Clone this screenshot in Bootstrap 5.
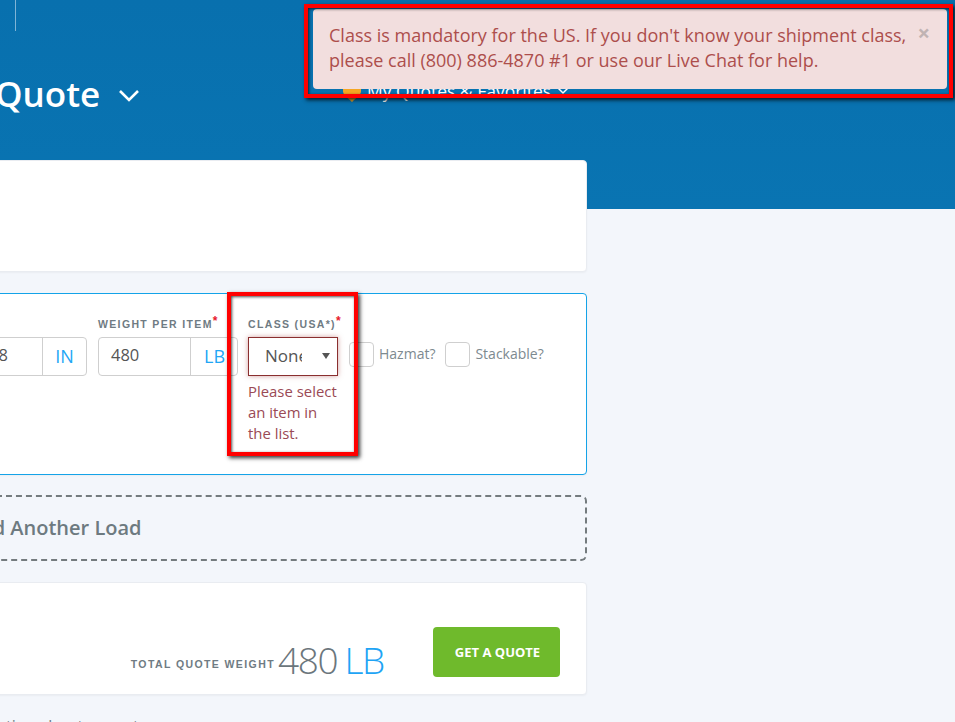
<!DOCTYPE html>
<html lang="en">
<head>
    <meta charset="UTF-8">
    <meta name="viewport" content="width=device-width, initial-scale=1.0">
    <title>Get a Quote</title>
    <link href="https://cdn.jsdelivr.net/npm/bootstrap@5.3.0/dist/css/bootstrap.min.css" rel="stylesheet">
    <style>
        html, body { height: 722px; overflow: hidden; }
        body { background: #f3f6fb; font-family: "Open Sans", sans-serif; color: #555; position: relative; }
        .hero { height: 209px; background: linear-gradient(180deg, #0870ae 0%, #0974b2 100%); color: #fff; }
        .hero-tick { width: 1px; height: 31px; margin-left: 15px; background: #7fb4d6; }
        .hero-row { margin-top: 35px; margin-left: -5px; height: 56px; }
        .hero-title { font-size: 35px; font-weight: 600; line-height: 56px; margin: 0; width: 105px; }
        .hero-chev { margin-left: 18px; margin-top: 22px; }
        .hero-fav { margin-left: 203px; font-size: 17.5px; margin-top: 12px; gap: 6px; }
        .page-col { width: 607px; margin-left: -20px; margin-top: -49px; gap: 21px; }
        .panel { background: #fff; border-radius: 4px; border: 1px solid #e9ecf1; box-shadow: 0 1px 2px rgba(0, 0, 0, .04); }
        .panel-top { height: 112px; }
        .panel-load { height: 182px; border-color: #14a3e8; padding: 22px 0 0 0; }
        .panel-add { height: 66px; background: transparent; border: 2px dashed #747b7e; box-shadow: none; border-radius: 6px; margin-top: -1px; }
        .add-text { font-size: 20px; font-weight: 600; color: #6d7a80; margin-left: -15px; }
        .panel-sum { height: 113px; padding: 44px 26px 0 0; }
        .field-label { font-family: "Liberation Sans", sans-serif; font-size: 10.5px; font-weight: 700; letter-spacing: 1.35px; color: #6f7b83; line-height: 14px; height: 14px; white-space: nowrap; margin-bottom: 6px; margin-top: 1px; }
        .field-label sup { color: #e8192c; font-size: 12px; top: -3px; letter-spacing: 0; }
        .box-group { height: 39px; border: 1px solid #cfcfcf; border-radius: 4px; background: #fff; }
        .box-input { font-size: 16.5px; color: #555; padding: 0 0 2px 12px; flex: 1 1 auto; }
        .box-unit { font-size: 18px; color: #22a6f5; border-left: 1px solid #cfcfcf; }
        .group-dims { width: 106px; }
        .group-dims .box-input { margin-left: -5px; }
        .group-dims .box-unit { width: 44px; }
        .group-weight { width: 140px; }
        .group-weight .box-unit { width: 47px; padding-left: 13px; }
        .field-weight { margin-left: 11px; }
        .field-class { width: 90px; margin-left: 10px; }
        .select-wrap { position: relative; }
        .select-wrap::after { content: ""; position: absolute; left: 74px; top: 16px; border-style: solid; border-width: 6px 4px 0 4px; border-color: #555 transparent transparent transparent; pointer-events: none; }
        .class-select { appearance: none; -webkit-appearance: none; display: block; width: 90px; height: 39px; border: 1px solid #8a2f2f; box-shadow: 0 0 5px rgba(169, 68, 66, .5); border-radius: 0; background: #fff; font-family: "Open Sans", sans-serif; font-size: 17px; color: #555; padding: 0 35px 2px 16px; outline: 0; }
        .class-help { font-size: 14.9px; line-height: 21px; color: #9a4a55; margin-top: 5px; }
        .tick-box { width: 25px; height: 25px; border: 1px solid #cfcfcf; border-radius: 4px; background: #fff; }
        .tick-text { font-size: 14px; color: #7d8a90; margin-left: 5px; padding-bottom: 2px; }
        .checks { margin-top: 26px; margin-left: 11px; height: 25px; }
        .check-two { margin-left: 10px; }
        .sum-label { font-family: "Liberation Sans", sans-serif; font-size: 10.5px; font-weight: 700; letter-spacing: 1.4px; color: #6f7b83; margin-right: 3px; padding-bottom: 9px; }
        .sum-num { font-size: 37px; font-weight: 300; letter-spacing: -1.3px; line-height: 44px; color: #6b767c; margin-top: 11px; }
        .sum-unit { color: #1ea4f5; margin-left: 7px; }
        .quote-btn { width: 127px; height: 50px; margin-left: 49px; padding: 2px 0 0 2px; background: #6fba2c; border: 0; border-radius: 4px; color: #fff; font-size: 13px; font-weight: 700; }
        .foot-text { font-size: 16px; color: #6d7a80; margin-top: 19px; margin-left: 6px; white-space: nowrap; }
        .flash { position: absolute; left: 313px; top: 9px; width: 634px; height: 80px; background: #f2dede; border-radius: 4px; color: #ad4e4c; font-size: 18px; line-height: 25px; padding: 14px 16px; }
        .flash-close { position: absolute; right: 17px; top: 11px; font-size: 22px; line-height: 25px; font-weight: 700; color: #c0b3b3; }
        .mark-box { position: absolute; border: 4px solid #f00; box-shadow: 2px 2px 4px rgba(0, 0, 0, .8), inset 1px 1px 3px rgba(0, 0, 0, .7); }
        .mark-top { left: 304px; top: 4px; width: 649px; height: 94px; }
        .mark-class { left: 227px; top: 292px; width: 131px; height: 164px; }
    </style>
</head>
<body>
    <div class="hero">
        <div class="hero-tick"></div>
        <div class="hero-row d-flex align-items-start">
            <h1 class="hero-title">Quote</h1>
            <svg class="hero-chev" width="22" height="14" viewBox="0 0 22 14" fill="none" stroke="#fff" stroke-width="2.6"><path d="M2 3l9 9 9-9"/></svg>
            <div class="hero-fav d-flex align-items-center">
                <svg width="18" height="22" viewBox="0 0 18 22"><path d="M0 2h18v9c0 4-4 6-9 11-5-5-9-7-9-11z" fill="#f5a623"/></svg>
                <span>My Quotes &amp; Favorites</span>
                <svg width="12" height="8" viewBox="0 0 12 8" fill="none" stroke="#fff" stroke-width="1.5"><path d="M1 1l5 5 5-5"/></svg>
            </div>
        </div>
    </div>

    <div class="page-col d-flex flex-column">
        <div class="panel panel-top"></div>
        <div class="panel panel-load d-flex">
            <div class="group-dims">
                <div class="field-label">&nbsp;</div>
                <div class="box-group d-flex align-items-center">
                    <div class="box-input">48</div>
                    <div class="box-unit h-100 d-flex align-items-center justify-content-center">IN</div>
                </div>
            </div>
            <div class="field-weight">
                <div class="field-label">WEIGHT PER ITEM<sup>*</sup></div>
                <div class="box-group group-weight d-flex align-items-center">
                    <div class="box-input">480</div>
                    <div class="box-unit h-100 d-flex align-items-center">LB</div>
                </div>
            </div>
            <div class="field-class">
                <div class="field-label">CLASS (USA*)<sup>*</sup></div>
                <div class="select-wrap">
                    <select class="class-select">
                        <option>None</option>
                    </select>
                </div>
                <div class="class-help">Please select an item in the list.</div>
            </div>
            <div class="checks d-flex align-items-center">
                <div class="tick-box"></div>
                <span class="tick-text">Hazmat?</span>
                <div class="tick-box check-two"></div>
                <span class="tick-text">Stackable?</span>
            </div>
        </div>
        <div class="panel panel-add d-flex align-items-center">
            <span class="add-text">Add Another Load</span>
        </div>
        <div class="panel panel-sum d-flex justify-content-end align-items-start">
            <div class="d-flex align-items-end">
                <span class="sum-label">TOTAL QUOTE WEIGHT</span>
                <span class="sum-num">480<span class="sum-unit">LB</span></span>
            </div>
            <button class="quote-btn" type="button">GET A QUOTE</button>
        </div>
    </div>
    <div class="foot-text">tion about our rates</div>

    <div class="flash">
        Class is mandatory for the US. If you don't know your shipment class, please call (800) 886-4870 #1 or use our Live Chat for help.
        <span class="flash-close">×</span>
    </div>
    <div class="mark-box mark-top"></div>
    <div class="mark-box mark-class"></div>

    <script src="https://cdn.jsdelivr.net/npm/bootstrap@5.3.0/dist/js/bootstrap.bundle.min.js"></script>
</body>
</html>
